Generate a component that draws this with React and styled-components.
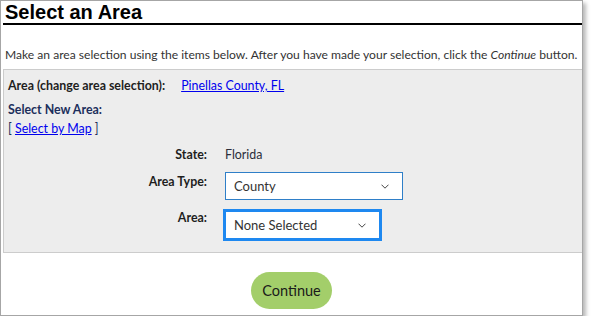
import React from 'react';
import styled, { createGlobalStyle } from 'styled-components';

const GlobalStyle = createGlobalStyle`
  body {
    margin: 0;
    background: #ffffff;
    font-family: Lato, "Open Sans", sans-serif;
  }
`;

const Frame = styled.div`
  width: 581px;
  height: 314px;
  border: 1px solid #a6a6a6;
  box-shadow: 3px 3px 4px rgba(0, 0, 0, 0.28);
  background: #ffffff;
  display: flex;
  flex-direction: column;
`;

const Heading = styled.h1`
  margin: 0 0 0 2px;
  padding-left: 2px;
  font-family: "Liberation Sans", Arial, sans-serif;
  font-size: 20px;
  line-height: 22px;
  font-weight: 700;
  color: #000;
  border-bottom: 2px solid #000;
`;

const Intro = styled.p`
  margin: 22px 0 0 4px;
  font-size: 12.1px;
  line-height: 16px;
  color: #333;
  white-space: nowrap;
`;

const Panel = styled.div`
  margin: 6px 0 0 2px;
  height: 184px;
  box-sizing: border-box;
  background: #ededed;
  border: 1px solid #cccccc;
  border-right: none;
  padding: 8px 0 0 4px;
  font-size: 12.4px;
  line-height: 16px;
  color: #1e1e1e;
`;

const Line = styled.div`
  display: flex;
  align-items: center;
  gap: ${({ gap }) => gap || 0}px;
  margin-top: ${({ top }) => top || 0}px;
`;

const Bold = styled.span`
  font-weight: 700;
  color: ${({ tone }) => tone || '#1e1e1e'};
`;

const Link = styled.a`
  color: #0000ee;
  text-decoration: underline;
  cursor: pointer;
`;

const Bracket = styled.span`
  color: #1c2f5c;
`;

const Form = styled.div`
  display: grid;
  grid-template-columns: 199px auto;
  column-gap: 18px;
  row-gap: 9px;
  margin-top: 10px;
  align-items: start;
`;

const Label = styled.div`
  text-align: right;
  font-weight: 700;
  color: #1e1e1e;
  padding-top: ${({ pad }) => pad || 0}px;
`;

const Value = styled.div`
  color: #2b2d3a;
`;

const Select = styled.div`
  width: ${({ w }) => w}px;
  height: 28px;
  box-sizing: border-box;
  background: #fff;
  border: 1px solid ${({ focused }) => (focused ? '#1e88f0' : '#2f7fc8')};
  box-shadow: ${({ focused }) => (focused ? '0 0 0 2px #1e88f0' : 'none')};
  display: flex;
  align-items: center;
  justify-content: space-between;
  padding: 0 13px 0 8px;
  font-size: 13px;
  color: #333;
  margin-top: ${({ top }) => top || 0}px;
`;

const Chevron = () => (
  <svg width="8" height="5" viewBox="0 0 8 5">
    <polyline points="0.5,0.7 4,4.2 7.5,0.7" fill="none" stroke="#444" strokeWidth="1" />
  </svg>
);

const Footer = styled.div`
  flex: 1;
  display: flex;
  justify-content: center;
  padding-top: 19px;
`;

const Button = styled.button`
  width: 81px;
  height: 37px;
  border: none;
  border-radius: 19px;
  background: #a3ce6a;
  color: #1a1a1a;
  font-family: Lato, "Open Sans", sans-serif;
  font-size: 14.5px;
  padding-top: 1px;
  cursor: pointer;
`;

export default function App() {
  return (
    <>
      <GlobalStyle />
      <Frame>
        <Heading>Select an Area</Heading>
        <Intro>
          Make an area selection using the items below. After you have made your selection, click the{' '}
          <i>Continue</i> button.
        </Intro>
        <Panel>
          <Line gap={16}>
            <Bold>Area (change area selection):</Bold>
            <Link>Pinellas County, FL</Link>
          </Line>
          <Line top={8}>
            <Bold tone="#1c2f5c">Select New Area:</Bold>
          </Line>
          <Line top={3}>
            <Bracket>
              [ <Link>Select by Map</Link> ]
            </Bracket>
          </Line>
          <Form>
            <Label>State:</Label>
            <Value>Florida</Value>
            <Label pad={2}>Area Type:</Label>
            <Select w={178}>
              County
              <Chevron />
            </Select>
            <Label pad={1}>Area:</Label>
            <Select w={155} focused top={2}>
              None Selected
              <Chevron />
            </Select>
          </Form>
        </Panel>
        <Footer>
          <Button>Continue</Button>
        </Footer>
      </Frame>
    </>
  );
}
